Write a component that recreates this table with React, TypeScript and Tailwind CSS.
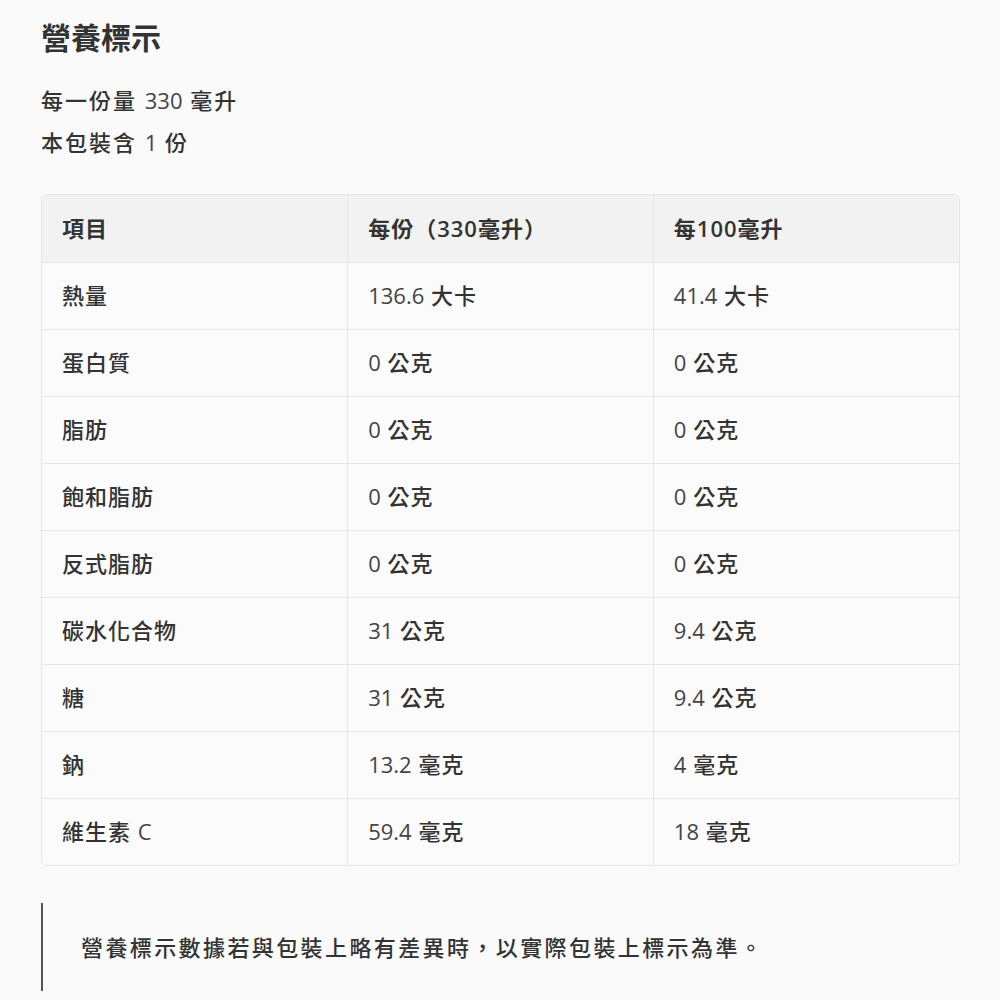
const rows: [string, [string, string], [string, string]][] = [
  ["熱量", ["136.6", "大卡"], ["41.4", "大卡"]],
  ["蛋白質", ["0", "公克"], ["0", "公克"]],
  ["脂肪", ["0", "公克"], ["0", "公克"]],
  ["飽和脂肪", ["0", "公克"], ["0", "公克"]],
  ["反式脂肪", ["0", "公克"], ["0", "公克"]],
  ["碳水化合物", ["31", "公克"], ["9.4", "公克"]],
  ["糖", ["31", "公克"], ["9.4", "公克"]],
  ["鈉", ["13.2", "毫克"], ["4", "毫克"]],
  ["維生素 C", ["59.4", "毫克"], ["18", "毫克"]],
];

const font = "font-['Open_Sans','Noto_Sans_CJK_TC',sans-serif]";

const Amount = ({ value }: { value: [string, string] }) => (
  <span>
    <span className="font-normal tracking-normal text-[#444]">{value[0]}</span>{" "}
    <span className="font-medium">{value[1]}</span>
  </span>
);

export default function App() {
  return (
    <div className={`min-h-screen bg-[#fafafa] pl-[41px] pr-[40px] pt-[17px] text-[#333] ${font}`}>
      <h1 className="text-[30px] font-semibold leading-[42px]">營養標示</h1>

      <div className="mt-[20px] text-[22px] font-medium leading-[42px] tracking-[2px]">
        <p>
          每一份量 <span className="font-normal tracking-normal text-[#444]">330</span> 毫升
        </p>
        <p>
          本包裝含 <span className="font-normal tracking-normal text-[#444]">1</span> 份
        </p>
      </div>

      <div className="mt-[31px] overflow-hidden rounded-md border border-[#e6e6e6]">
        <table className="w-full table-fixed border-collapse text-[22px] tracking-[1px]">
          <thead>
            <tr className="h-[67px] bg-[#f2f2f2] text-left">
              <th className="px-[20px] font-semibold">項目</th>
              <th className="border-l border-[#e6e6e6] px-[20px] font-semibold">每份（330毫升）</th>
              <th className="border-l border-[#e6e6e6] px-[20px] font-semibold">每100毫升</th>
            </tr>
          </thead>
          <tbody className="bg-[#fbfbfb]">
            {rows.map(([name, per, per100]) => (
              <tr key={name} className="h-[67px] border-t border-[#e6e6e6]">
                <td className="px-[20px] font-medium">
                  {name === "維生素 C" ? (
                    <>
                      維生素 <span className="font-normal tracking-normal text-[#444]">C</span>
                    </>
                  ) : (
                    name
                  )}
                </td>
                <td className="border-l border-[#e6e6e6] px-[20px]">
                  <Amount value={per} />
                </td>
                <td className="border-l border-[#e6e6e6] px-[20px]">
                  <Amount value={per100} />
                </td>
              </tr>
            ))}
          </tbody>
        </table>
      </div>

      <blockquote className="mt-[37px] flex h-[88px] items-center border-l-2 border-[#555] pl-[38px] text-[22px] font-medium tracking-[2.4px]">
        營養標示數據若與包裝上略有差異時，以實際包裝上標示為準。
      </blockquote>
    </div>
  );
}
